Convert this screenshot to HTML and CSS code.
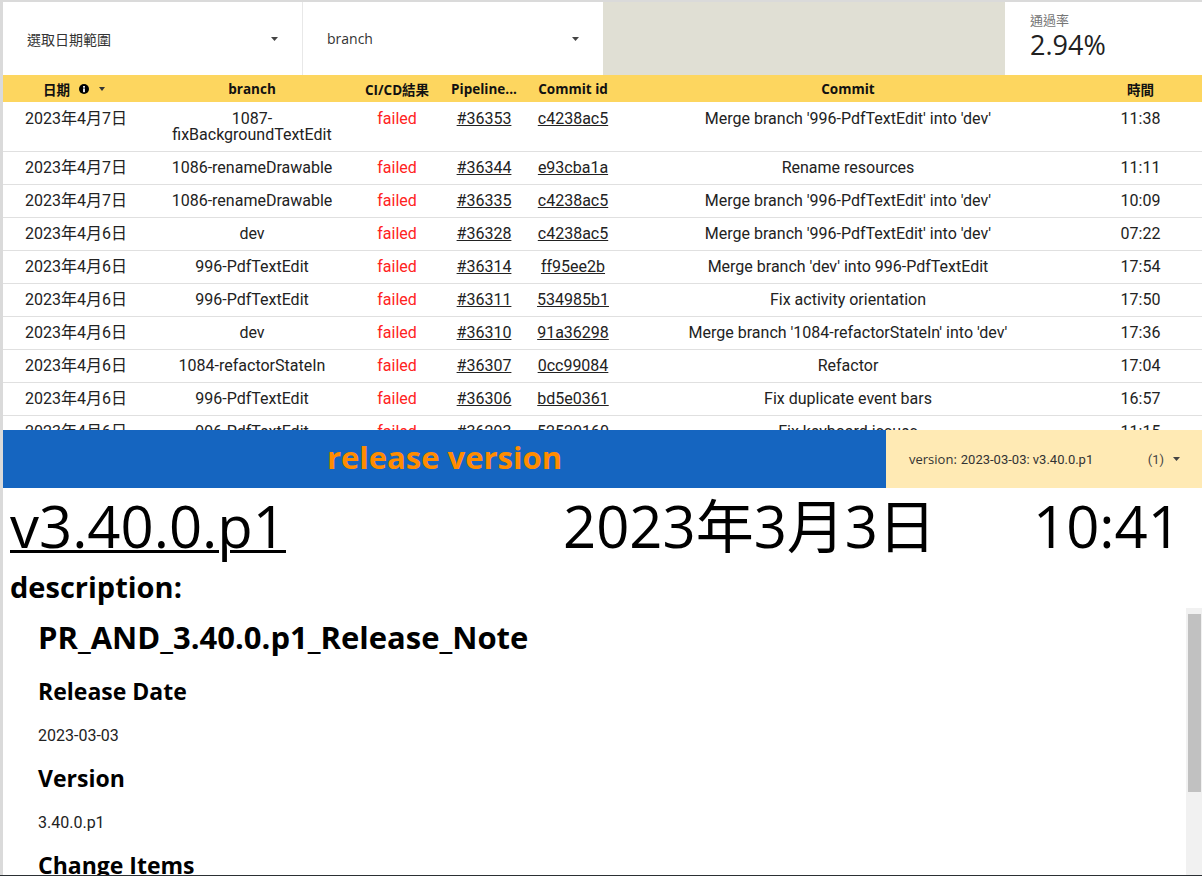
FILE: index.html
```html
<!DOCTYPE html>
<html lang="zh-Hant">
<head>
<meta charset="utf-8">
<title>CI/CD Report</title>
<link rel="stylesheet" href="styles.css">
</head>
<body>
<div class="page">
  <div class="canvas">
    <div class="controls">
      <div class="dropdown first">
        <span>選取日期範圍</span>
        <svg class="caret" width="7" height="4" viewBox="0 0 7 4"><path d="M0 0H7L3.5 4Z"/></svg>
      </div>
      <div class="dropdown">
        <span>branch</span>
        <svg class="caret" width="7" height="4" viewBox="0 0 7 4"><path d="M0 0H7L3.5 4Z"/></svg>
      </div>
      <div class="filler"></div>
      <div class="scorecard">
        <div class="score-label">通過率</div>
        <div class="score-value">2.94%</div>
      </div>
    </div>

    <div class="table">
      <div class="thead">
        <div class="th">日期
          <svg class="info" width="10" height="10" viewBox="0 0 10 10"><circle cx="5" cy="5" r="5"/><rect x="4.1" y="2" width="1.8" height="1.7" fill="#fff"/><rect x="4.1" y="4.4" width="1.8" height="3.8" fill="#fff"/></svg>
          <svg class="sort" width="6" height="4" viewBox="0 0 6 4"><path d="M0 0H6L3 4Z"/></svg>
        </div>
        <div class="th">branch</div>
        <div class="th">CI/CD結果</div>
        <div class="th">Pipeline...</div>
        <div class="th">Commit id</div>
        <div class="th">Commit</div>
        <div class="th">時間</div>
      </div>
      <div class="tbody">
        <div class="row">
          <div class="td">2023年4月7日</div>
          <div class="td">1087-fixBackgroundTextEdit</div>
          <div class="td failed">failed</div>
          <div class="td"><span class="link">#36353</span></div>
          <div class="td"><span class="link">c4238ac5</span></div>
          <div class="td">Merge branch '996-PdfTextEdit' into 'dev'</div>
          <div class="td">11:38</div>
        </div>
        <div class="row">
          <div class="td">2023年4月7日</div>
          <div class="td">1086-renameDrawable</div>
          <div class="td failed">failed</div>
          <div class="td"><span class="link">#36344</span></div>
          <div class="td"><span class="link">e93cba1a</span></div>
          <div class="td">Rename resources</div>
          <div class="td">11:11</div>
        </div>
        <div class="row">
          <div class="td">2023年4月7日</div>
          <div class="td">1086-renameDrawable</div>
          <div class="td failed">failed</div>
          <div class="td"><span class="link">#36335</span></div>
          <div class="td"><span class="link">c4238ac5</span></div>
          <div class="td">Merge branch '996-PdfTextEdit' into 'dev'</div>
          <div class="td">10:09</div>
        </div>
        <div class="row">
          <div class="td">2023年4月6日</div>
          <div class="td">dev</div>
          <div class="td failed">failed</div>
          <div class="td"><span class="link">#36328</span></div>
          <div class="td"><span class="link">c4238ac5</span></div>
          <div class="td">Merge branch '996-PdfTextEdit' into 'dev'</div>
          <div class="td">07:22</div>
        </div>
        <div class="row">
          <div class="td">2023年4月6日</div>
          <div class="td">996-PdfTextEdit</div>
          <div class="td failed">failed</div>
          <div class="td"><span class="link">#36314</span></div>
          <div class="td"><span class="link">ff95ee2b</span></div>
          <div class="td">Merge branch 'dev' into 996-PdfTextEdit</div>
          <div class="td">17:54</div>
        </div>
        <div class="row">
          <div class="td">2023年4月6日</div>
          <div class="td">996-PdfTextEdit</div>
          <div class="td failed">failed</div>
          <div class="td"><span class="link">#36311</span></div>
          <div class="td"><span class="link">534985b1</span></div>
          <div class="td">Fix activity orientation</div>
          <div class="td">17:50</div>
        </div>
        <div class="row">
          <div class="td">2023年4月6日</div>
          <div class="td">dev</div>
          <div class="td failed">failed</div>
          <div class="td"><span class="link">#36310</span></div>
          <div class="td"><span class="link">91a36298</span></div>
          <div class="td">Merge branch '1084-refactorStateIn' into 'dev'</div>
          <div class="td">17:36</div>
        </div>
        <div class="row">
          <div class="td">2023年4月6日</div>
          <div class="td">1084-refactorStateIn</div>
          <div class="td failed">failed</div>
          <div class="td"><span class="link">#36307</span></div>
          <div class="td"><span class="link">0cc99084</span></div>
          <div class="td">Refactor</div>
          <div class="td">17:04</div>
        </div>
        <div class="row">
          <div class="td">2023年4月6日</div>
          <div class="td">996-PdfTextEdit</div>
          <div class="td failed">failed</div>
          <div class="td"><span class="link">#36306</span></div>
          <div class="td"><span class="link">bd5e0361</span></div>
          <div class="td">Fix duplicate event bars</div>
          <div class="td">16:57</div>
        </div>
        <div class="row">
          <div class="td">2023年4月6日</div>
          <div class="td">996-PdfTextEdit</div>
          <div class="td failed">failed</div>
          <div class="td"><span class="link">#36293</span></div>
          <div class="td"><span class="link">52520160</span></div>
          <div class="td">Fix keyboard issues</div>
          <div class="td">11:15</div>
        </div>
      </div>
    </div>

    <div class="banner">
      <div class="banner-title">release version</div>
      <div class="version-select">
        <span class="version-key">version:</span>
        <span class="version-value">2023-03-03: v3.40.0.p1</span>
        <span class="version-count">(1)</span>
        <svg class="caret" width="7" height="4" viewBox="0 0 7 4"><path d="M0 0H7L3.5 4Z"/></svg>
      </div>
    </div>

    <div class="release-line">
      <div class="release-name">v3.40.0.p1</div>
      <div class="release-date">2023年3月3日</div>
      <div class="release-time">10:41</div>
    </div>

    <div class="desc-label">description:</div>

    <div class="notes">
      <div class="notes-content">
        <h1>PR_AND_3.40.0.p1_Release_Note</h1>
        <h2>Release Date</h2>
        <p>2023-03-03</p>
        <h2>Version</h2>
        <p>3.40.0.p1</p>
        <h2>Change Items</h2>
      </div>
      <div class="scrollbar"><div class="thumb"></div></div>
    </div>
  </div>
  <div class="bottom-line"></div>
</div>
</body>
</html>
```
FILE: styles.css
```css
* { box-sizing: border-box; }
html, body { margin: 0; padding: 0; }
body {
  width: 1202px;
  height: 876px;
  overflow: hidden;
  background: #dadada;
  font-family: "Open Sans", "Noto Sans CJK TC", sans-serif;
  color: #212121;
}
.page { display: flex; flex-direction: column; height: 876px; }
.canvas {
  flex: 1;
  min-height: 0;
  margin: 2px 0 0 3px;
  background: #fff;
  display: flex;
  flex-direction: column;
}
.bottom-line { height: 1px; background: #2b3034; }

/* controls */
.controls { height: 73px; display: flex; flex-shrink: 0; }
.dropdown {
  width: 300px;
  display: flex;
  align-items: center;
  justify-content: space-between;
  padding: 0 24px;
  font-size: 14px;
  color: #333;
}
.dropdown.first { border-right: 1px solid #e8e8e8; }
.caret { fill: #444; display: block; }
.filler { width: 402px; background: #e0dfd4; }
.scorecard { flex: 1; padding: 9px 0 0 25px; }
.score-label { font-size: 13px; line-height: 18px; color: #757575; }
.score-value { font-size: 27px; line-height: 32px; color: #212121; }

/* table */
.table { display: flex; flex-direction: column; flex-shrink: 0; }
.thead, .row {
  display: grid;
  grid-template-columns: 146px 206px 84px 90px 88px 462px 123px;
}
.thead {
  height: 27px;
  background: #fdd65f;
  font-weight: 700;
  font-size: 13.5px;
  color: #111;
}
.th { display: flex; align-items: center; justify-content: center; white-space: nowrap; }
.th:first-child { padding-right: 4px; }
.info { margin-left: 9px; fill: #000; display: block; }
.sort { margin-left: 10px; fill: #333; display: block; }
.tbody {
  height: 328px;
  overflow: hidden;
  padding-top: 1px;
  font-family: Roboto, "Noto Sans CJK TC", sans-serif;
  font-size: 16px;
  line-height: 16px;
  color: #222;
}
.row { border-bottom: 1px solid #e0e0e0; padding: 8px 0; }
.td { text-align: center; padding: 0 8px; }
.failed { color: #ff2222; }
.link { text-decoration: underline; }

/* banner */
.banner { height: 58px; display: flex; flex-shrink: 0; }
.banner-title {
  width: 883px;
  background: #1565c0;
  color: #ff8c00;
  font-weight: 700;
  font-size: 31px;
  line-height: 40px;
  display: flex;
  align-items: center;
  justify-content: center;
  padding-bottom: 5px;
}
.version-select {
  flex: 1;
  background: #ffeab4;
  display: flex;
  align-items: center;
  padding: 0 22px 0 23px;
  font-size: 13px;
  color: #333;
}
.version-value { font-family: Roboto, sans-serif; margin-left: 4px; }
.version-count { font-family: Roboto, sans-serif; margin-left: auto; margin-right: 9px; color: #444; }

/* release line */
.release-line {
  display: grid;
  grid-template-columns: 553px 470px auto;
  padding: 6px 0 0 7px;
  font-size: 58px;
  line-height: 64px;
  color: #000;
  white-space: nowrap;
  flex-shrink: 0;
}
.release-name { text-decoration: underline; text-decoration-thickness: 3px; }

.desc-label {
  padding: 12px 0 4px 7px;
  font-size: 29px;
  font-weight: 700;
  line-height: 34px;
  color: #000;
  flex-shrink: 0;
}

/* notes */
.notes { flex: 1; min-height: 0; display: flex; }
.notes-content { flex: 1; overflow: hidden; padding: 9px 0 0 35px; color: #000; }
.notes-content h1 { margin: 0 0 19px; font-size: 31px; line-height: 40px; font-weight: 700; }
.notes-content h2 { margin: 0 0 19px; font-size: 23px; line-height: 30px; font-weight: 700; }
.notes-content p { margin: 0 0 16px; font-family: Roboto, sans-serif; font-size: 16px; line-height: 22px; color: #222; }
.notes-content h2 + p { margin-top: 0; }
.scrollbar { width: 16px; background: #f1f1f1; padding: 6px 1px 0 2px; }
.thumb { height: 178px; background: #c1c1c1; }
```
